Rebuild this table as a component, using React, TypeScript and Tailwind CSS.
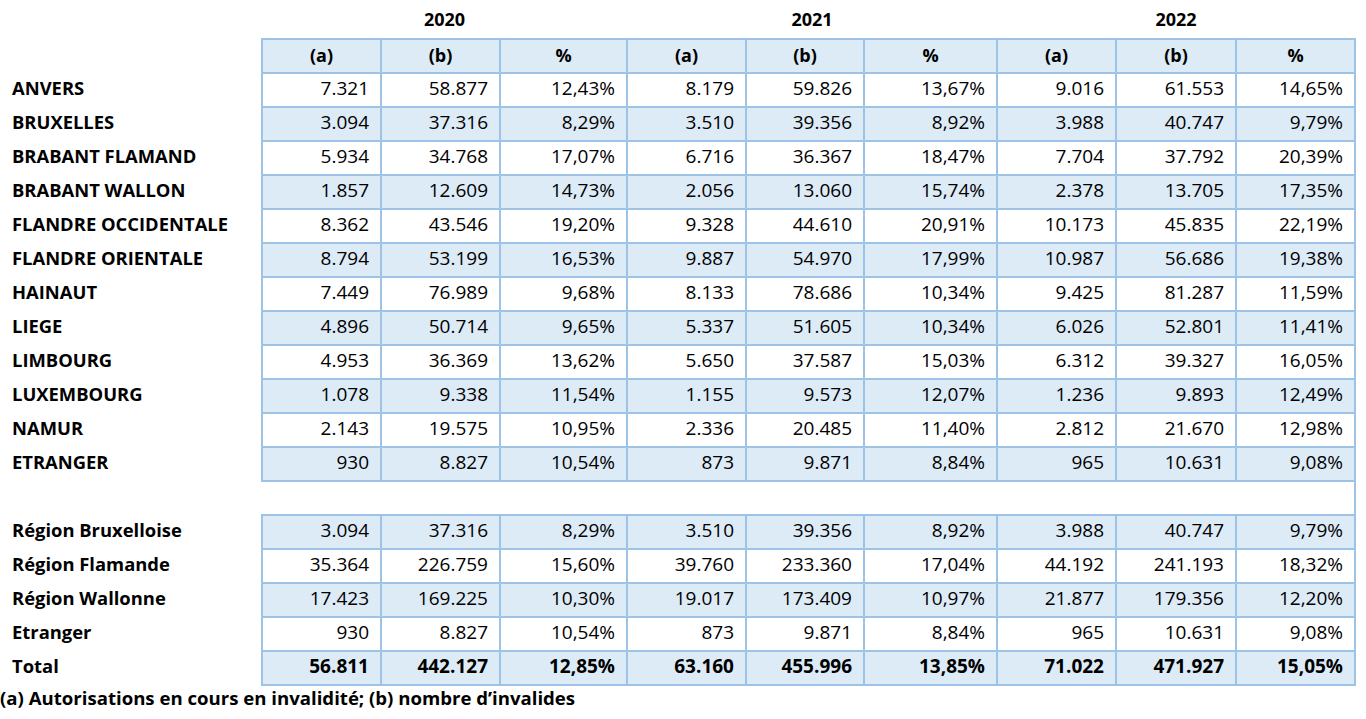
import React from 'react';

const provinces: [string, string[]][] = [
  ['ANVERS', ['7.321', '58.877', '12,43%', '8.179', '59.826', '13,67%', '9.016', '61.553', '14,65%']],
  ['BRUXELLES', ['3.094', '37.316', '8,29%', '3.510', '39.356', '8,92%', '3.988', '40.747', '9,79%']],
  ['BRABANT FLAMAND', ['5.934', '34.768', '17,07%', '6.716', '36.367', '18,47%', '7.704', '37.792', '20,39%']],
  ['BRABANT WALLON', ['1.857', '12.609', '14,73%', '2.056', '13.060', '15,74%', '2.378', '13.705', '17,35%']],
  ['FLANDRE OCCIDENTALE', ['8.362', '43.546', '19,20%', '9.328', '44.610', '20,91%', '10.173', '45.835', '22,19%']],
  ['FLANDRE ORIENTALE', ['8.794', '53.199', '16,53%', '9.887', '54.970', '17,99%', '10.987', '56.686', '19,38%']],
  ['HAINAUT', ['7.449', '76.989', '9,68%', '8.133', '78.686', '10,34%', '9.425', '81.287', '11,59%']],
  ['LIEGE', ['4.896', '50.714', '9,65%', '5.337', '51.605', '10,34%', '6.026', '52.801', '11,41%']],
  ['LIMBOURG', ['4.953', '36.369', '13,62%', '5.650', '37.587', '15,03%', '6.312', '39.327', '16,05%']],
  ['LUXEMBOURG', ['1.078', '9.338', '11,54%', '1.155', '9.573', '12,07%', '1.236', '9.893', '12,49%']],
  ['NAMUR', ['2.143', '19.575', '10,95%', '2.336', '20.485', '11,40%', '2.812', '21.670', '12,98%']],
  ['ETRANGER', ['930', '8.827', '10,54%', '873', '9.871', '8,84%', '965', '10.631', '9,08%']],
];

const regions: [string, string[]][] = [
  ['Région Bruxelloise', ['3.094', '37.316', '8,29%', '3.510', '39.356', '8,92%', '3.988', '40.747', '9,79%']],
  ['Région Flamande', ['35.364', '226.759', '15,60%', '39.760', '233.360', '17,04%', '44.192', '241.193', '18,32%']],
  ['Région Wallonne', ['17.423', '169.225', '10,30%', '19.017', '173.409', '10,97%', '21.877', '179.356', '12,20%']],
  ['Etranger', ['930', '8.827', '10,54%', '873', '9.871', '8,84%', '965', '10.631', '9,08%']],
];

const total = ['56.811', '442.127', '12,85%', '63.160', '455.996', '13,85%', '71.022', '471.927', '15,05%'];

const cell = 'border-2 border-[#9dc3e6] h-[34px] p-0 pb-[3px] pr-[11px] text-right';

function DataRow({ label, values, shaded, bold }: { label: string; values: string[]; shaded: boolean; bold?: boolean }) {
  return (
    <tr>
      <td className="h-[34px] p-0 pb-[3px] pl-[12px] text-left text-[18.4px] font-bold">{label}</td>
      {values.map((v, i) => (
        <td key={i} className={`${cell} ${shaded ? 'bg-[#ddebf7]' : 'bg-white'} ${bold ? 'font-bold' : ''}`}>
          {v}
        </td>
      ))}
    </tr>
  );
}

export default function App() {
  return (
    <div className="w-[1366px] h-[719px] bg-white text-black overflow-hidden" style={{ fontFamily: '"Open Sans", sans-serif' }}>
      <table className="table-fixed border-collapse text-[19px] leading-none">
        <colgroup>
          <col className="w-[262px]" />
          <col className="w-[119px]" />
          <col className="w-[119px]" />
          <col className="w-[127px]" />
          <col className="w-[119px]" />
          <col className="w-[118px]" />
          <col className="w-[133px]" />
          <col className="w-[119px]" />
          <col className="w-[120px]" />
          <col className="w-[119px]" />
        </colgroup>
        <tbody>
          <tr>
            <td className="h-[39px] p-0" />
            <td colSpan={3} className="h-[39px] p-0 text-center font-bold text-[18px]">2020</td>
            <td colSpan={3} className="h-[39px] p-0 text-center font-bold text-[18px]">2021</td>
            <td colSpan={3} className="h-[39px] p-0 text-center font-bold text-[18px]">2022</td>
          </tr>
          <tr>
            <td className="h-[34px] p-0" />
            {['(a)', '(b)', '%', '(a)', '(b)', '%', '(a)', '(b)', '%'].map((h, i) => (
              <td key={i} className="border-2 border-[#9dc3e6] h-[34px] p-0 pb-[3px] text-center font-bold text-[18px] bg-[#ddebf7]">
                {h}
              </td>
            ))}
          </tr>
          {provinces.map(([label, values], i) => (
            <DataRow key={label} label={label} values={values} shaded={i % 2 === 1} />
          ))}
          <tr>
            <td className="h-[34px] p-0" />
            <td colSpan={9} className="h-[34px] p-0 border-r-2 border-[#9dc3e6] bg-white" />
          </tr>
          {regions.map(([label, values], i) => (
            <DataRow key={label} label={label} values={values} shaded={i % 2 === 0} />
          ))}
          <DataRow label="Total" values={total} shaded bold />
        </tbody>
      </table>
      <div className="text-[18.6px] font-bold leading-[24px]">(a) Autorisations en cours en invalidité; (b) nombre d’invalides</div>
    </div>
  );
}
